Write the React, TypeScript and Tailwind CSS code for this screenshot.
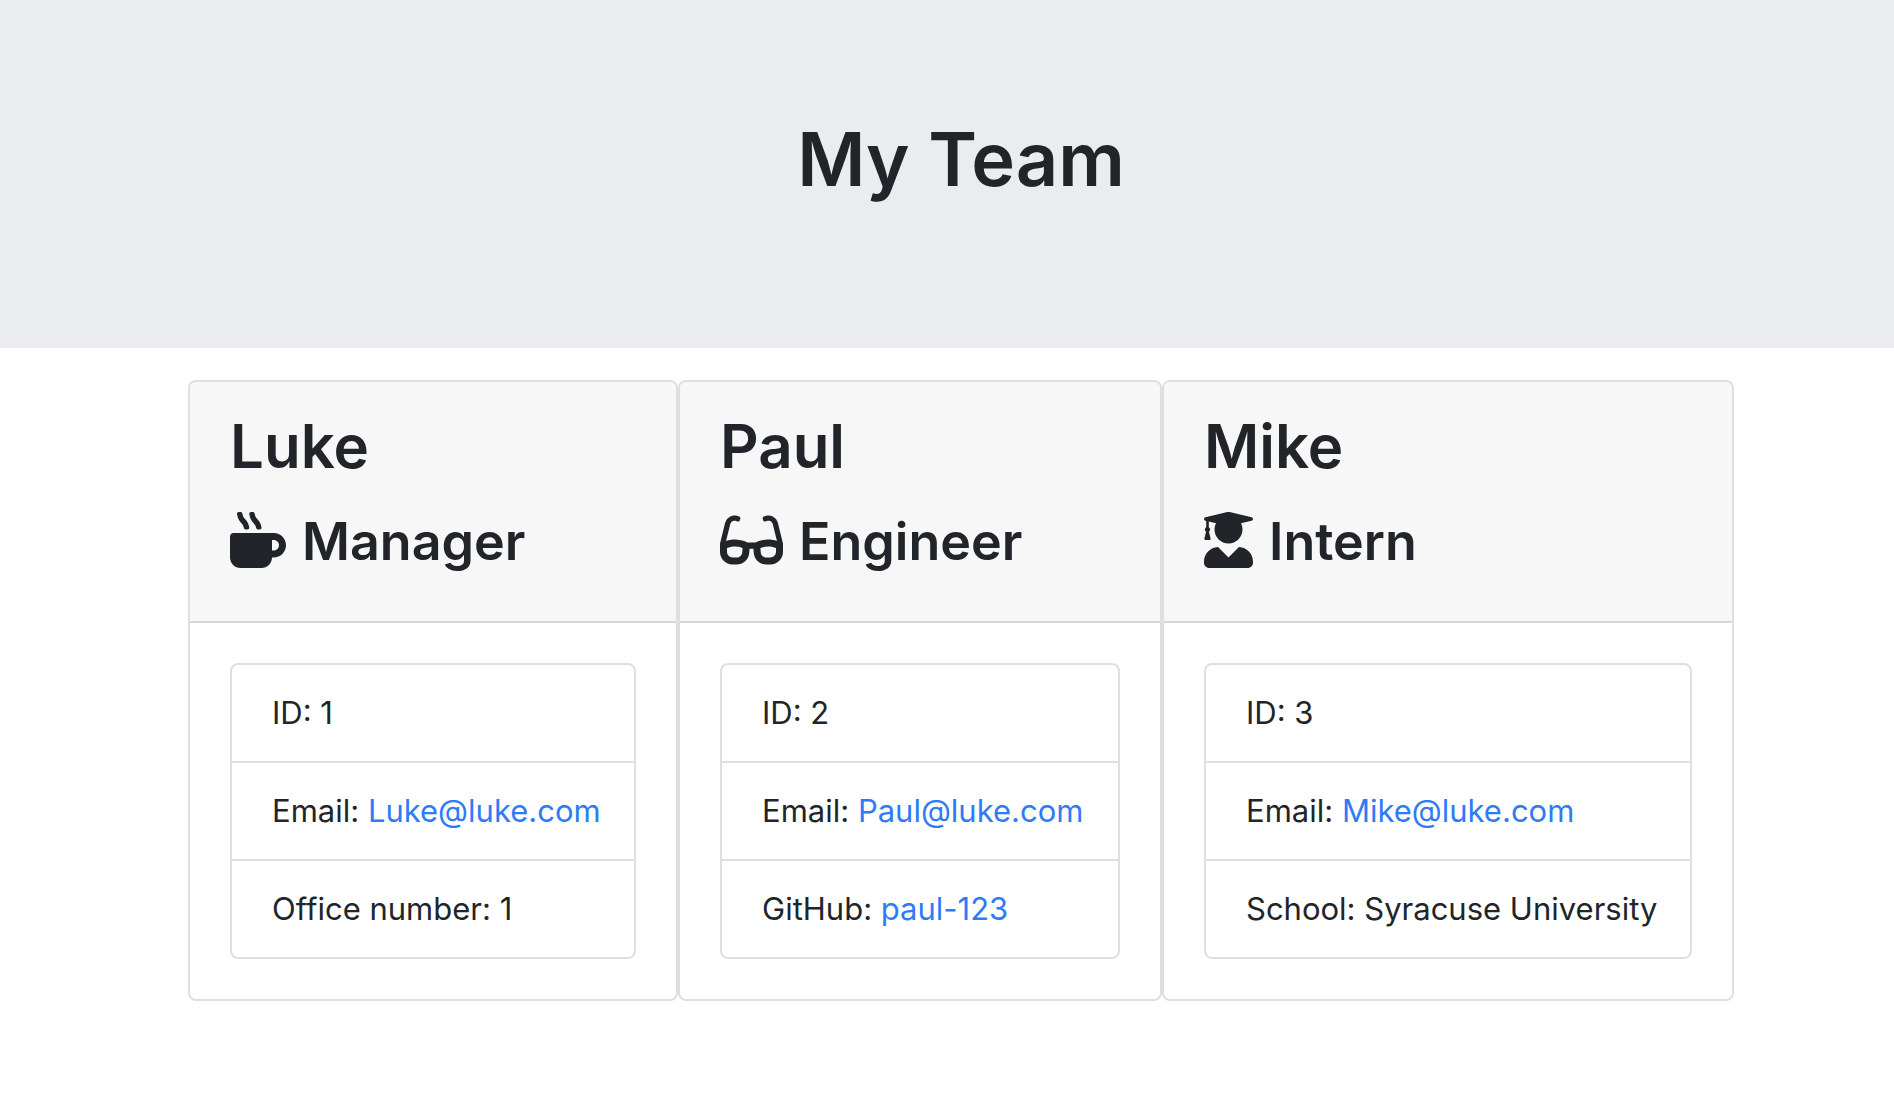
import type { ReactNode } from "react";
import { FaMugHot, FaGlasses, FaUserGraduate } from "react-icons/fa";

type Member = { name: string; role: string; icon: ReactNode; width: string; rows: ReactNode[] };

const link = "text-[#2f7bf6]";
const icon = "mr-4 inline-block h-14 align-[-8px]";

const team: Member[] = [
  {
    name: "Luke",
    role: "Manager",
    icon: <FaMugHot className={`${icon} w-14`} aria-hidden="true" />,
    width: "w-[490px]",
    rows: ["ID: 1", <>Email: <a className={link} href="mailto:Luke@luke.com">Luke@luke.com</a></>, "Office number: 1"],
  },
  {
    name: "Paul",
    role: "Engineer",
    icon: <FaGlasses className={`${icon} w-[63px]`} aria-hidden="true" />,
    width: "w-[484px]",
    rows: [
      "ID: 2",
      <>Email: <a className={link} href="mailto:Paul@luke.com">Paul@luke.com</a></>,
      <>GitHub: <a className={link} href="https://github.com/paul-123">paul-123</a></>,
    ],
  },
  {
    name: "Mike",
    role: "Intern",
    icon: <FaUserGraduate className={`${icon} w-[49px]`} aria-hidden="true" />,
    width: "w-[572px]",
    rows: ["ID: 3", <>Email: <a className={link} href="mailto:Mike@luke.com">Mike@luke.com</a></>, "School: Syracuse University"],
  },
];

function Card({ member }: { member: Member }) {
  return (
    <article className={`${member.width} rounded-lg border-2 border-[#dfdfdf] bg-white`}>
      <header className="rounded-t-md border-b-2 border-[#d8d8d8] bg-[#f7f7f7] px-10 pt-6 pb-11">
        <h2 className="mb-5 text-[60px] leading-[80px] font-semibold">{member.name}</h2>
        <h3 className="text-[52px] leading-[71px] font-semibold whitespace-nowrap">
          {member.icon}
          {member.role}
        </h3>
      </header>
      <div className="p-10">
        <ul className="divide-y-2 divide-[#dfdfdf] rounded-lg border-2 border-[#dfdfdf]">
          {member.rows.map((row, i) => (
            <li key={i} className="px-10 py-6 text-[31px] leading-[48px] whitespace-nowrap">{row}</li>
          ))}
        </ul>
      </div>
    </article>
  );
}

export default function App() {
  return (
    <div className="min-h-screen bg-white font-['Inter',sans-serif] text-[#212529]">
      <header className="bg-[#ebecf0] pt-[111px] pr-8 pb-[141px] pl-[60px]">
        <h1 className="text-center text-[74px] leading-[96px] font-semibold">My Team</h1>
      </header>
      <main className="flex justify-center pt-8 pl-7">
        {team.map((m) => <Card key={m.name} member={m} />)}
      </main>
    </div>
  );
}
